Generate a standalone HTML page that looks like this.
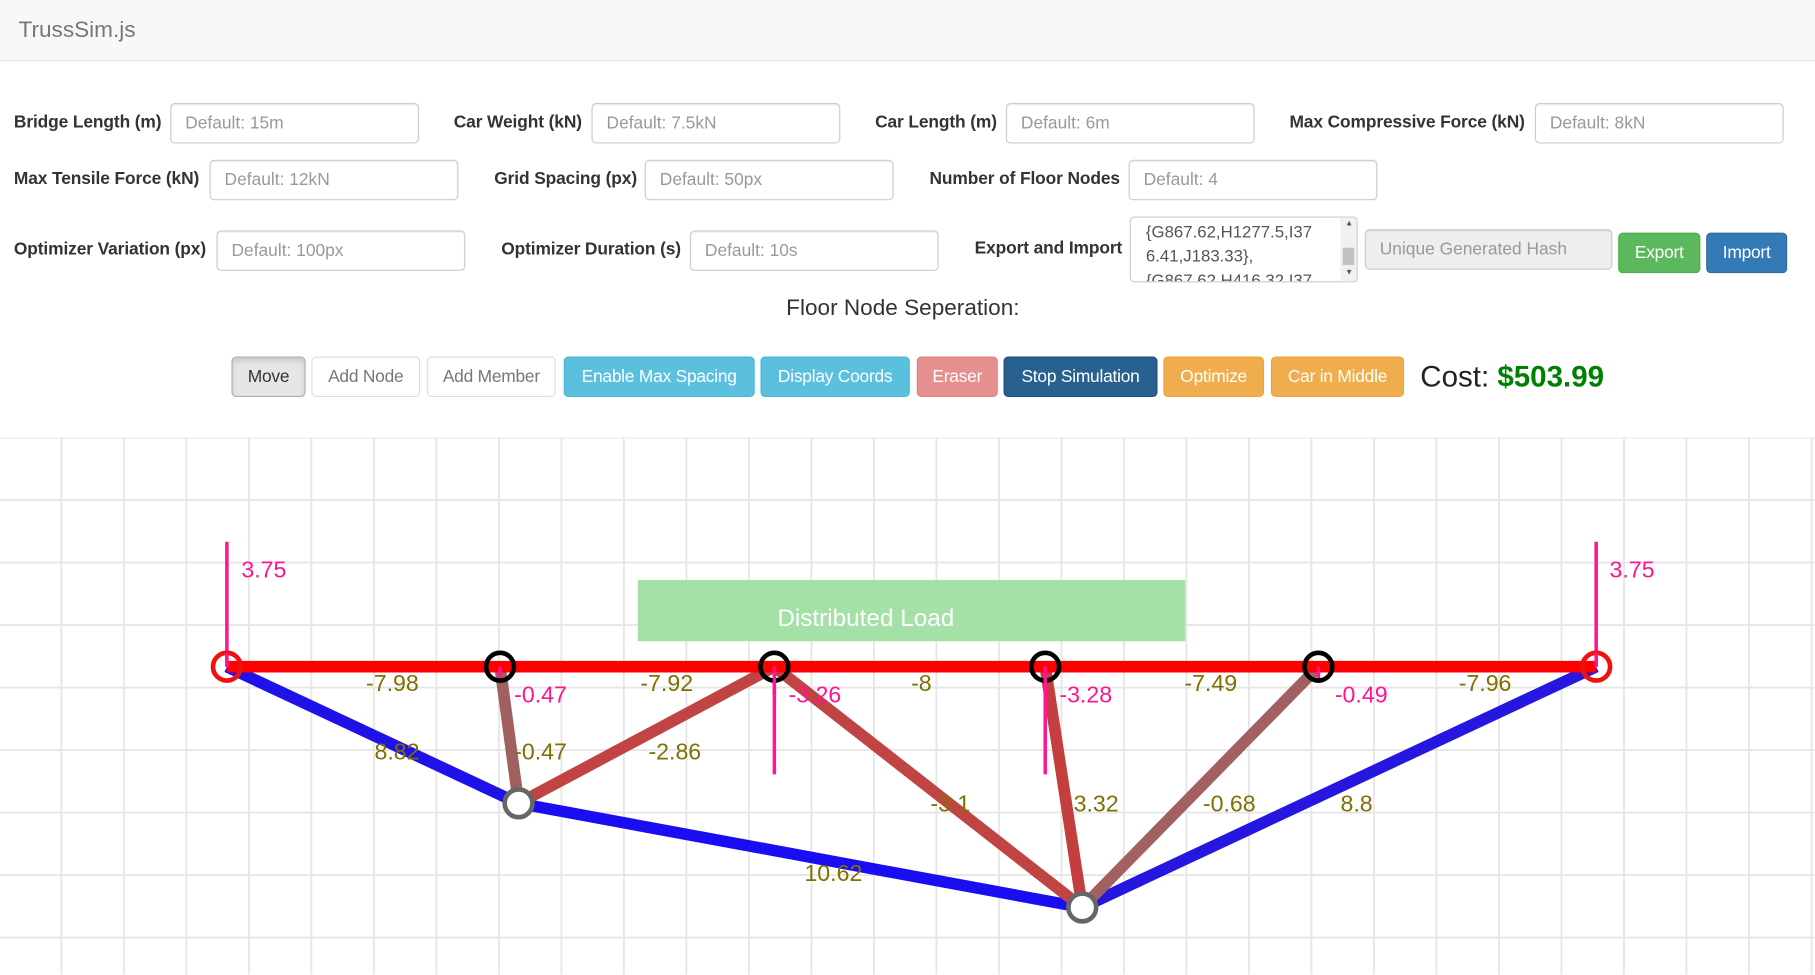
<!DOCTYPE html>
<html><head><meta charset="utf-8"><style>
html,body{margin:0;padding:0;width:1815px;height:975px;overflow:hidden;background:#fff}
#w{position:absolute;left:0;top:0;width:1568px;height:842px;transform:scale(1.1575);transform-origin:0 0;font-family:"Liberation Sans",Arial,sans-serif;font-size:15px;color:#333}
.a{position:absolute}
.nav{left:0;top:0;width:1568px;height:52px;background:#f8f8f8;border-bottom:1px solid #e7e7e7}
.lb{position:absolute;font-weight:bold;line-height:20px;letter-spacing:-0.1px}
.in{position:absolute;height:35px;border:1px solid #ccc;border-radius:4px;box-sizing:border-box;color:#999;padding:0 12px;line-height:33px;background:#fff;box-shadow:inset 0 1px 1px rgba(0,0,0,.075)}
.b{position:absolute;top:308px;height:35px;box-sizing:border-box;border:1px solid;border-radius:4px;color:#fff;text-align:center;line-height:33px;font-size:15px;white-space:nowrap;letter-spacing:-0.2px}
</style></head><body><div id="w">
<div class="a nav"></div>
<div class="a" style="left:16px;top:15px;font-size:19.5px;color:#777">TrussSim.js</div>

<div class="lb" style="left:12px;top:96px">Bridge Length (m)</div><div class="in" style="left:147px;top:89px;width:215px">Default: 15m</div>
<div class="lb" style="left:392px;top:96px">Car Weight (kN)</div><div class="in" style="left:511px;top:89px;width:215px">Default: 7.5kN</div>
<div class="lb" style="left:756px;top:96px">Car Length (m)</div><div class="in" style="left:869px;top:89px;width:215px">Default: 6m</div>
<div class="lb" style="left:1114px;top:96px">Max Compressive Force (kN)</div><div class="in" style="left:1326px;top:89px;width:215px">Default: 8kN</div>

<div class="lb" style="left:12px;top:145px">Max Tensile Force (kN)</div><div class="in" style="left:181px;top:138px;width:215px">Default: 12kN</div>
<div class="lb" style="left:427px;top:145px">Grid Spacing (px)</div><div class="in" style="left:557px;top:138px;width:215px">Default: 50px</div>
<div class="lb" style="left:803px;top:145px">Number of Floor Nodes</div><div class="in" style="left:975px;top:138px;width:215px">Default: 4</div>

<div class="lb" style="left:12px;top:206px">Optimizer Variation (px)</div><div class="in" style="left:187px;top:199px;width:215px">Default: 100px</div>
<div class="lb" style="left:433px;top:206px">Optimizer Duration (s)</div><div class="in" style="left:596px;top:199px;width:215px">Default: 10s</div>
<div class="lb" style="left:842px;top:205px">Export and Import</div>
<div class="a" style="left:976px;top:187px;width:197px;height:57px;border:1px solid #ccc;border-radius:4px;box-sizing:border-box;overflow:hidden;background:#fff">
 <div style="position:absolute;left:13px;top:3px;width:160px;line-height:21px;color:#555;font-size:14.5px">{G867.62,H1277.5,I37<br>6.41,J183.33},<br>{G867.62,H416.32,I37</div>
 <div style="position:absolute;right:0;top:0;width:14px;height:57px;background:#f1f1f1"></div>
 <div style="position:absolute;right:2px;top:26px;width:10px;height:15px;background:#c1c1c1"></div>
 <div style="position:absolute;right:3px;top:2px;font-size:7px;color:#555">▲</div>
 <div style="position:absolute;right:3px;top:44px;font-size:7px;color:#555">▼</div>
</div>
<div class="in" style="left:1179px;top:198px;width:214px;background:#eee">Unique Generated Hash</div>
<div class="b" style="left:1398px;top:201px;width:71px;background:#5cb85c;border-color:#4cae4c">Export</div>
<div class="b" style="left:1474px;top:201px;width:70px;background:#337ab7;border-color:#2e6da4">Import</div>

<div class="a" style="left:0;width:1560px;top:255px;text-align:center;font-size:19.5px">Floor Node Seperation:</div>

<div class="b" style="left:200px;width:64px;background:#e6e6e6;border-color:#adadad;color:#333;box-shadow:inset 0 3px 5px rgba(0,0,0,.125)">Move</div>
<div class="b" style="left:269px;width:94px;background:#fff;border-color:#ddd;color:#777">Add Node</div>
<div class="b" style="left:369px;width:111px;background:#fff;border-color:#ddd;color:#777">Add Member</div>
<div class="b" style="left:487px;width:165px;background:#5bc0de;border-color:#46b8da">Enable Max Spacing</div>
<div class="b" style="left:657px;width:129px;background:#5bc0de;border-color:#46b8da">Display Coords</div>
<div class="b" style="left:792px;width:70px;background:#e68f8f;border-color:#e08080">Eraser</div>
<div class="b" style="left:867px;width:133px;background:#286090;border-color:#204d74">Stop Simulation</div>
<div class="b" style="left:1005px;width:87px;background:#f0ad4e;border-color:#eea236">Optimize</div>
<div class="b" style="left:1098px;width:115px;background:#f0ad4e;border-color:#eea236">Car in Middle</div>
<div class="a" style="left:1227px;top:312px;font-size:25.5px;color:#222">Cost: <b style="color:#008000">$503.99</b></div>

<svg class="a" style="left:0;top:378px" width="1568" height="464" viewBox="0 378 1568 464" font-family="Liberation Sans,Arial,sans-serif" font-size="20">
<g stroke="#e6e6e6" stroke-width="1.6">
<line x1="0" y1="378" x2="1568" y2="378"/><line x1="0" y1="432" x2="1568" y2="432"/><line x1="0" y1="486" x2="1568" y2="486"/><line x1="0" y1="540" x2="1568" y2="540"/><line x1="0" y1="594" x2="1568" y2="594"/><line x1="0" y1="648" x2="1568" y2="648"/><line x1="0" y1="702" x2="1568" y2="702"/><line x1="0" y1="756" x2="1568" y2="756"/><line x1="0" y1="810" x2="1568" y2="810"/>
<line x1="53" y1="378" x2="53" y2="842"/><line x1="107" y1="378" x2="107" y2="842"/><line x1="161" y1="378" x2="161" y2="842"/><line x1="215" y1="378" x2="215" y2="842"/><line x1="269" y1="378" x2="269" y2="842"/><line x1="323" y1="378" x2="323" y2="842"/><line x1="377" y1="378" x2="377" y2="842"/><line x1="431" y1="378" x2="431" y2="842"/><line x1="485" y1="378" x2="485" y2="842"/><line x1="539" y1="378" x2="539" y2="842"/><line x1="593" y1="378" x2="593" y2="842"/><line x1="647" y1="378" x2="647" y2="842"/><line x1="701" y1="378" x2="701" y2="842"/><line x1="755" y1="378" x2="755" y2="842"/><line x1="809" y1="378" x2="809" y2="842"/><line x1="863" y1="378" x2="863" y2="842"/><line x1="917" y1="378" x2="917" y2="842"/><line x1="971" y1="378" x2="971" y2="842"/><line x1="1025" y1="378" x2="1025" y2="842"/><line x1="1079" y1="378" x2="1079" y2="842"/><line x1="1133" y1="378" x2="1133" y2="842"/><line x1="1187" y1="378" x2="1187" y2="842"/><line x1="1241" y1="378" x2="1241" y2="842"/><line x1="1295" y1="378" x2="1295" y2="842"/><line x1="1349" y1="378" x2="1349" y2="842"/><line x1="1403" y1="378" x2="1403" y2="842"/><line x1="1457" y1="378" x2="1457" y2="842"/><line x1="1511" y1="378" x2="1511" y2="842"/><line x1="1565" y1="378" x2="1565" y2="842"/>
</g>
<rect x="551" y="501" width="473" height="53" fill="#a3e1a7"/>
<text x="748" y="541" fill="#fff" text-anchor="middle" font-size="21">Distributed Load</text>
<g stroke-width="10" stroke-linecap="butt">
<line x1="196" y1="576" x2="448" y2="694" stroke="#1f12e8"/>
<line x1="448" y1="694" x2="935" y2="784" stroke="#1a0df2"/>
<line x1="935" y1="784" x2="1379" y2="576" stroke="#2517e0"/>
<line x1="432" y1="576" x2="448" y2="694" stroke="#a06060"/>
<line x1="448" y1="694" x2="669" y2="576" stroke="#c04444"/>
<line x1="669" y1="576" x2="935" y2="784" stroke="#c04444"/>
<line x1="903" y1="576" x2="935" y2="784" stroke="#c43e3e"/>
<line x1="1139" y1="576" x2="935" y2="784" stroke="#a36060"/>
<line x1="196" y1="576" x2="1379" y2="576" stroke="#ff0000"/>
</g>
<g stroke="#ff1493" stroke-width="3">
<line x1="196" y1="468" x2="196" y2="576"/><line x1="1379" y1="468" x2="1379" y2="576"/>
<line x1="669" y1="576" x2="669" y2="669"/><line x1="903" y1="576" x2="903" y2="669"/>
<line x1="432" y1="576" x2="432" y2="590"/><line x1="1139" y1="576" x2="1139" y2="590"/>
</g>
<g fill="#fff" stroke-width="4">
<circle cx="196" cy="576" r="12" stroke="#f01010" fill="none"/><circle cx="1379" cy="576" r="12" stroke="#f01010" fill="none"/>
<circle cx="432" cy="576" r="12" stroke="#000" fill="none"/><circle cx="669" cy="576" r="12" stroke="#000" fill="none"/><circle cx="903" cy="576" r="12" stroke="#000" fill="none"/><circle cx="1139" cy="576" r="12" stroke="#000" fill="none"/>
<circle cx="448" cy="694" r="12" stroke="#666"/><circle cx="935" cy="784" r="12" stroke="#666"/>
</g>
<g stroke="#ff1493" stroke-width="3"><line x1="196" y1="564" x2="196" y2="576"/><line x1="1379" y1="564" x2="1379" y2="576"/><line x1="669" y1="576" x2="669" y2="600"/><line x1="903" y1="576" x2="903" y2="600"/></g>
<g fill="#7f7000" text-anchor="middle">
<text x="339" y="597">-7.98</text><text x="576" y="597">-7.92</text><text x="796" y="597">-8</text><text x="1046" y="597">-7.49</text><text x="1283" y="597">-7.96</text>
<text x="343" y="656">8.82</text><text x="467" y="656">-0.47</text><text x="583" y="656">-2.86</text>
<text x="821" y="701">-3.1</text><text x="947" y="701">3.32</text><text x="1062" y="701">-0.68</text><text x="1172" y="701">8.8</text>
<text x="720" y="761">10.62</text>
</g>
<g fill="#ff1493" text-anchor="middle">
<text x="228" y="499">3.75</text><text x="1410" y="499">3.75</text>
<text x="467" y="607">-0.47</text><text x="704" y="607">-3.26</text><text x="938" y="607">-3.28</text><text x="1176" y="607">-0.49</text>
</g>
</svg>
</div></body></html>
